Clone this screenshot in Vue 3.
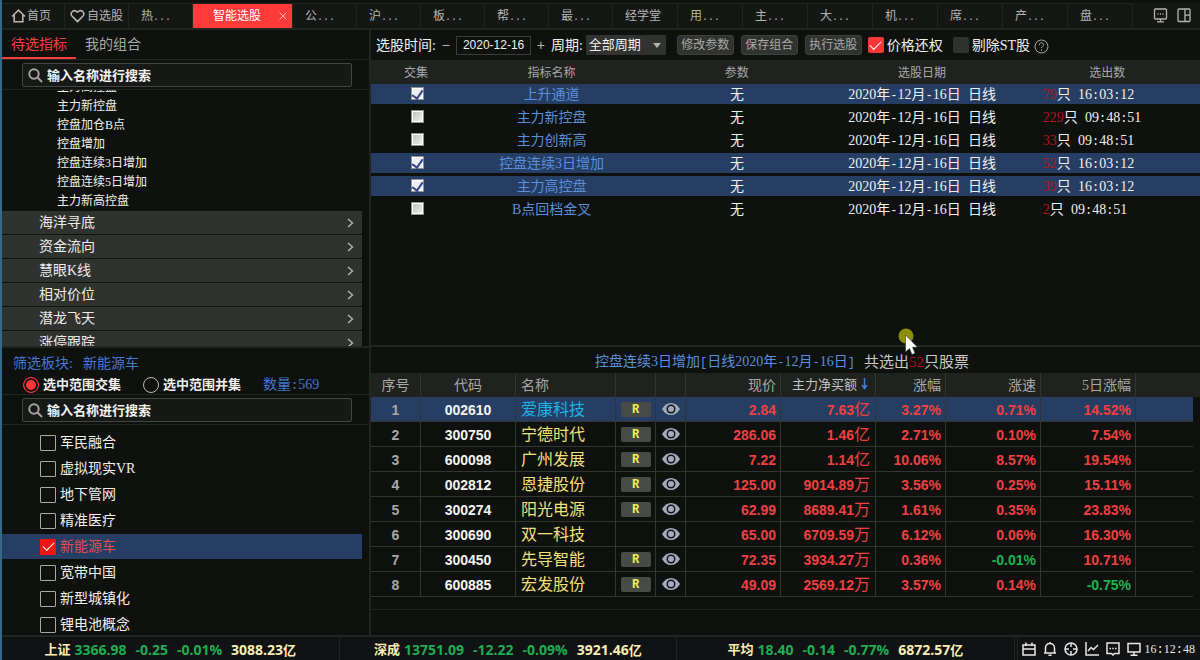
<script setup>
import { ref, h } from 'vue'

// Draws text with punctuation and spaces in half-em monospaced cells.
const Cells = (props) =>
  h('span', { class: 'cells' }, String(props.t).split(/([-.:[\]+ ]+)/).map((part, i) =>
    i % 2 ? h('span', { class: 'half' }, part) : part))
Cells.props = ['t']

const tabs = [
  { t: '公...' }, { t: '沪...' }, { t: '板...' }, { t: '帮...' }, { t: '最...' }, { t: '经学堂' },
  { t: '用...' }, { t: '主...' }, { t: '大...' }, { t: '机...' }, { t: '席...' }, { t: '产...' }, { t: '盘...' },
]
const indicators = ['主力高控盘', '主力新控盘', '控盘加仓B点', '控盘增加', '控盘连续3日增加', '控盘连续5日增加', '主力新高控盘']
const groups = ['海洋寻底', '资金流向', '慧眼K线', '相对价位', '潜龙飞天', '涨停跟踪']
const boards = ref([
  { n: '军民融合', on: false }, { n: '虚拟现实VR', on: false }, { n: '地下管网', on: false },
  { n: '精准医疗', on: false }, { n: '新能源车', on: true }, { n: '宽带中国', on: false },
  { n: '新型城镇化', on: false }, { n: '锂电池概念', on: false },
])
const picks = ref([
  { n: '上升通道', c: 79, time: '16:03:12', on: true },
  { n: '主力新控盘', c: 229, time: '09:48:51', on: false },
  { n: '主力创新高', c: 33, time: '09:48:51', on: false },
  { n: '控盘连续3日增加', c: 52, time: '16:03:12', on: true },
  { n: '主力高控盘', c: 39, time: '16:03:12', on: true },
  { n: 'B点回档金叉', c: 2, time: '09:48:51', on: false },
])
const stocks = [
  ['002610', '爱康科技', true, '2.84', '7.63', '亿', '3.27%', '0.71%', '14.52%'],
  ['300750', '宁德时代', true, '286.06', '1.46', '亿', '2.71%', '0.10%', '7.54%'],
  ['600098', '广州发展', true, '7.22', '1.14', '亿', '10.06%', '8.57%', '19.54%'],
  ['002812', '恩捷股份', true, '125.00', '9014.89', '万', '3.56%', '0.25%', '15.11%'],
  ['300274', '阳光电源', true, '62.99', '8689.41', '万', '1.61%', '0.35%', '23.83%'],
  ['300690', '双一科技', false, '65.00', '6709.59', '万', '6.12%', '0.06%', '16.30%'],
  ['300450', '先导智能', true, '72.35', '3934.27', '万', '0.36%', '-0.01%', '10.71%'],
  ['600885', '宏发股份', true, '49.09', '2569.12', '万', '3.57%', '0.14%', '-0.75%'],
]
const indexes = [
  { n: '上证', v: '3366.98', d: '-0.25', p: '-0.01%', a: '3088.23' },
  { n: '深成', v: '13751.09', d: '-12.22', p: '-0.09%', a: '3921.46' },
  { n: '平均', v: '18.40', d: '-0.14', p: '-0.77%', a: '6872.57' },
]
const range = ref('and')
const date = ref('2020-12-16')
const period = ref('全部周期')
const adjust = ref(true)
const noSt = ref(false)
</script>

<template>
  <div class="app">
    <nav class="tabs">
      <a href="#" class="tab icon-tab">
        <svg width="15" height="14" viewBox="0 0 15 14"><path d="M1 7.500 7.500 1.200 14 7.500M3.200 6v6.800h8.600V6" /></svg>首页
      </a>
      <a href="#" class="tab icon-tab">
        <svg width="15" height="14" viewBox="0 0 15 14"><path d="M7.500 12.600 2.200 7.300C-.6 4 3.600-.8 7.500 3.200 11.400-.8 15.600 4 12.800 7.300Z" /></svg>自选股
      </a>
      <a href="#" class="tab"><Cells t="热..." /></a>
      <a href="#" class="tab active">智能选股
        <svg width="8" height="8" viewBox="0 0 8 8"><path d="M.5.5l7 7M7.500.5l-7 7" /></svg>
      </a>
      <a v-for="x in tabs" :key="x.t" href="#" class="tab"><Cells :t="x.t" /></a>
      <div class="tools">
        <button aria-label="消息">
          <svg width="15" height="15" viewBox="0 0 15 15"><path d="M2.500 1h10q1 0 1 1v8q0 1-1 1h-10q-1 0-1-1V2q0-1 1-1ZM4 13.800h7M7.500 11v2.800M4.500 6h1M7 6h1M9.500 6h1" /></svg>
        </button>
        <button aria-label="布局">
          <svg width="14" height="15" viewBox="0 0 14 15"><path d="M2 1h10q1 0 1 1v10.500q0 1-1 1H2q-1 0-1-1V2q0-1 1-1ZM8 1v12.500M8 7.200h5" /></svg>
        </button>
      </div>
    </nav>

    <main class="body">
      <aside class="left">
        <section class="upper">
          <div class="side-tabs">
            <button class="on">待选指标</button>
            <button>我的组合</button>
          </div>
          <div class="search-row">
            <label class="search">
              <svg width="15" height="15" viewBox="0 0 15 15"><circle cx="6" cy="6" r="4.700" /><path d="m9.500 9.500 4.500 4.500" /></svg>
              <input type="text" placeholder="输入名称进行搜索" aria-label="搜索指标" />
            </label>
          </div>
          <div class="tree">
            <ul class="leafs"><li v-for="x in indicators" :key="x">{{ x }}</li></ul>
            <button v-for="g in groups" :key="g" class="group">
              <span>{{ g }}</span>
              <svg width="7" height="10" viewBox="0 0 7 10"><path d="m1 1 4.500 4L1 9" /></svg>
            </button>
          </div>
        </section>

        <section class="lower">
          <p class="filter">筛选板块:<span>新能源车</span></p>
          <div class="radios">
            <label><input v-model="range" type="radio" value="and" />选中范围交集</label>
            <label><input v-model="range" type="radio" value="or" />选中范围并集</label>
            <span class="count"><Cells t="数量:569" /></span>
          </div>
          <div class="search-row">
            <label class="search">
              <svg width="15" height="15" viewBox="0 0 15 15"><circle cx="6" cy="6" r="4.700" /><path d="m9.500 9.500 4.500 4.500" /></svg>
              <input type="text" placeholder="输入名称进行搜索" aria-label="搜索板块" />
            </label>
          </div>
          <div class="boards">
            <label v-for="b in boards" :key="b.n" class="board" :class="{ on: b.on }">
              <input v-model="b.on" type="checkbox" />{{ b.n }}
            </label>
          </div>
        </section>
      </aside>

      <div class="right">
        <form class="bar" @submit.prevent>
          <label for="day" class="cap">选股时间:</label>
          <button class="step" aria-label="前一天">−</button>
          <input id="day" v-model="date" type="text" class="day" />
          <button class="step" aria-label="后一天">+</button>
          <label for="period" class="cap">周期:</label>
          <span class="select">
            <select id="period" v-model="period"><option>全部周期</option></select>
          </span>
          <div class="actions">
            <button class="btn">修改参数</button>
            <button class="btn">保存组合</button>
            <button class="btn">执行选股</button>
          </div>
          <label class="flag"><input v-model="adjust" type="checkbox" /><span class="cap">价格还权</span></label>
          <label class="flag second"><input v-model="noSt" type="checkbox" /><span class="cap">剔除ST股</span></label>
          <button class="help" aria-label="帮助">
            <svg width="15" height="15" viewBox="0 0 15 15"><circle cx="7.500" cy="7.500" r="6.500" /><path d="M5.300 6c0-3 4.400-2.800 4.400-.2C9.700 7.300 7.500 7.200 7.500 9M7.500 10.400v1.400" /></svg>
          </button>
        </form>

        <div class="picks">
          <table>
            <colgroup><col class="c-check" /><col /><col /><col /><col /></colgroup>
            <thead><tr><th class="first">交集</th><th>指标名称</th><th>参数</th><th>选股日期</th><th>选出数</th></tr></thead>
            <tbody>
              <tr v-for="p in picks" :key="p.n" :class="{ on: p.on }">
                <td class="check"><input v-model="p.on" type="checkbox" :aria-label="p.n" /></td>
                <td class="name">{{ p.n }}</td>
                <td>无</td>
                <td><Cells t="2020年-12月-16日 日线" /></td>
                <td class="num"><b>{{ p.c }}</b><Cells :t="'只 ' + p.time" /></td>
              </tr>
            </tbody>
          </table>
        </div>

        <div class="result">
          <h2><Cells t="控盘连续3日增加[日线2020年-12月-16日]" /><span class="sum">共选出<b>52</b>只股票</span></h2>
          <table>
            <colgroup>
              <col class="w50" /><col class="w95" /><col class="w100" /><col class="w40" /><col class="w30" />
              <col class="w95" /><col class="w95" /><col class="w70" /><col class="w95" /><col class="w95" /><col /><col class="w7" />
            </colgroup>
            <thead>
              <tr>
                <th class="mid">序号</th><th class="mid">代码</th><th class="lt">名称</th><th></th><th></th><th>现价</th>
                <th class="sort">主力净买额<svg width="7" height="12" viewBox="0 0 7 12"><path d="M3.500 0v10M1 7l2.500 3.500L6 7" /></svg></th>
                <th>涨幅</th><th>涨速</th><th>5日涨幅</th><th class="end"></th><th class="end"></th>
              </tr>
            </thead>
            <tbody>
              <tr v-for="(s, i) in stocks" :key="s[0]" :class="{ on: i === 0 }">
                <td class="mid no">{{ i + 1 }}</td>
                <td class="mid code">{{ s[0] }}</td>
                <td class="lt stock">{{ s[1] }}</td>
                <td class="mid icon"><span v-if="s[2]" class="r">R</span></td>
                <td class="mid icon eye">
                  <svg width="18" height="12" viewBox="0 0 18 12"><path class="lid" d="M0 6Q3.500 0 9 0T18 6Q14.500 12 9 12T0 6Z" /><circle class="iris" cx="9" cy="6" r="4.500" /><circle class="pupil" cx="9" cy="6" r="3" /></svg>
                </td>
                <td>{{ s[3] }}</td>
                <td class="sum-cell">{{ s[4] }}<span class="unit">{{ s[5] }}</span></td>
                <td v-for="k in [6, 7, 8]" :key="k" :class="{ down: s[k][0] === '-' }">{{ s[k] }}</td>
                <td class="end"></td><td class="gutter"></td>
              </tr>
            </tbody>
          </table>
          <div class="rule"></div>
        </div>
        <svg class="cursor" width="20" height="28" viewBox="0 0 20 28">
          <circle cx="9" cy="8" r="7.500" fill="#8f8f0c" />
          <path d="M8.500 7v17l4-3.500 2.500 6 3-1.300-2.500-6h5Z" fill="#fff" stroke="#222" stroke-width=".5" />
        </svg>
      </div>
    </main>

    <footer class="status">
      <div v-for="x in indexes" :key="x.n" class="index">
        <span class="zh">{{ x.n }}</span><span class="dn">{{ x.v }}</span><span class="dn gap">{{ x.d }}</span><span class="dn gap">{{ x.p }}</span><span class="gap">{{ x.a }}<span class="zh">亿</span></span>
      </div>
      <div class="tray">
        <svg width="14" height="14" viewBox="0 0 14 14"><path d="M1 3h12v10H1ZM1 7h12M4 .5V4M10 .5V4" /></svg>
        <svg width="14" height="14" viewBox="0 0 14 14"><path d="M1 11h12M2.500 11V6c0-6 9-6 9 0v5M5.500 13.300h3M7 0v2" /></svg>
        <svg width="14" height="14" viewBox="0 0 14 14"><circle cx="7" cy="7" r="6" /><path d="M7 1v4M7 9v4M1 7h4M9 7h4" /></svg>
        <svg width="14" height="14" viewBox="0 0 14 14"><path d="M1 0v13h13M3 9l3-3.500 2.500 2L13 3" /></svg>
        <svg width="14" height="14" viewBox="0 0 14 14"><path d="M1 1h12v10.500H8.500L7 13l-1.500-1.500H1ZM3.500 6.500H5M6.300 6.500h1.500M9 6.500h1.500" /></svg>
        <svg width="14" height="14" viewBox="0 0 14 14"><path d="M1 1.500h12V10H1ZM7 10v3M3.500 13.200h7" /></svg>
        <time><Cells t="16:12:48" /></time>
      </div>
    </footer>
  </div>
</template>

<style>
body { margin: 0; background: #0f110f; }
.cells .half { font-family: "Liberation Mono", monospace; font-size: 12px; line-height: 1; white-space: pre; }
.tab .half, time .half { font-size: 10px; }
</style>

<style scoped>
* { box-sizing: border-box; }
.app {
  display: grid; grid-template-rows: 30px minmax(0, 1fr) 25px; height: 100vh;
  border-left: 2px solid #35698a; background: #0f110f; color: #f0f0ee;
  font: 14px/20px "Liberation Serif", "Noto Sans CJK SC", serif; overflow: hidden;
}
button, input, select { font: inherit; color: inherit; background: none; border: 0; padding: 0; margin: 0; }
svg { fill: none; stroke: currentColor; flex: none; }
ul, p, h2 { margin: 0; padding: 0; list-style: none; font-weight: 400; }
table { width: 100%; table-layout: fixed; border-collapse: separate; border-spacing: 0; }
th, td { padding: 0; font-weight: 400; white-space: nowrap; }

.tabs { display: flex; background: #151715; border-top: 3px solid #101210; border-bottom: 2px solid #232523; font-size: 12px; color: #b4b4b2; }
.tab {
  flex: 0 1 65px; min-width: 0; display: flex; align-items: center; padding-left: 12px; white-space: nowrap;
  color: inherit; text-decoration: none; border-right: 1px solid #232523; border-top: 1px solid #232523;
}
.tab:nth-child(-n+9) { flex-basis: 64px; }
.tab:first-child { flex-basis: 63px; }
.icon-tab { padding-left: 9px; gap: 1px; }
.icon-tab:nth-child(2) { padding-left: 5px; gap: 2px; }
.icon-tab svg { stroke-width: 1.6; }
.tab.active { flex: 0 0 100px; padding: 0 5px 0 20px; background: #fe3a3a; color: #fff; justify-content: space-between; }
.active svg { color: #ffc0c0; }
.tools { margin-left: auto; display: flex; align-items: center; gap: 9px; padding-right: 9px; }
.tools button { display: flex; }
.tools svg { stroke-width: 1.3; }

.body { display: grid; grid-template-columns: 369px minmax(0, 1fr); min-height: 0; }
.left { display: grid; grid-template-rows: 318px minmax(0, 1fr); border-right: 2px solid #232523; min-height: 0; }
.upper, .lower { display: flex; flex-direction: column; min-height: 0; }
.side-tabs { display: flex; flex: none; height: 30px; border-bottom: 1px solid #232523; color: #a8a8a6; }
.side-tabs button { padding: 2px 9px 0; border-bottom: 2px solid transparent; }
.side-tabs .on { color: #f4413f; border-bottom-color: #f4413f; }
.search-row { flex: none; padding: 3px 17px 2px 20px; border-bottom: 1px solid #232523; }
.search { display: flex; align-items: center; gap: 4px; height: 24px; padding-left: 5px; background: #171917; border: 1px solid #434543; border-radius: 2px; }
.search svg { stroke: #a2a4a2; stroke-width: 2; }
.search input { flex: 1; min-width: 0; outline: 0; font: bold 13px/20px "Open Sans", "Noto Sans CJK SC", sans-serif; }
.search input::placeholder { color: #f4f4f2; opacity: 1; }
.tree { flex: 1; min-height: 0; overflow: hidden; padding-right: 7px; border-bottom: 2px solid #232523; }
.leafs { margin-top: -12px; padding: 0 0 0 55px; font-size: 12px; line-height: 19px; }
.group { display: flex; align-items: center; justify-content: space-between; width: 100%; height: 24px; padding: 0 8px 0 37px; background: #303230; border-bottom: 1px solid #121412; color: #ecece9; }
.group svg { color: #b4b4b2; stroke-width: 1.4; }

.filter { height: 25px; padding: 6px 0 0 11px; line-height: 19px; color: #4678d2; }
.filter span { margin-left: 10px; }
.radios { display: flex; align-items: center; height: 22px; padding: 2px 0 0 21px; border-bottom: 1px solid #232523; font: bold 13px/19px "Open Sans", "Noto Sans CJK SC", sans-serif; }
.radios label { display: flex; align-items: center; gap: 4px; margin-right: 22px; }
.radios input { appearance: none; width: 16px; height: 16px; border: 1px solid #b6b6b4; border-radius: 50%; }
.radios input:checked { border: 1px solid #fb3838; background: #fb3838; box-shadow: inset 0 0 0 2px #0f110f; }
.count { color: #4678d2; font: 14px/19px "Liberation Serif", "Noto Sans CJK SC", serif; }
.boards { flex: 1; min-height: 0; overflow: hidden; padding-top: 5px; }
.board { display: flex; align-items: center; gap: 4px; height: 25px; margin: 0 7px 1px 0; padding-left: 38px; }
.board.on { background: #263e63; color: #dc5050; }
.board input, .flag input { appearance: none; display: grid; place-items: center; width: 16px; height: 16px; border: 1px solid #a8a8a6; border-radius: 1px; }
.board input:checked { background: #f01414; border-color: #f01414; }
.board input:checked::after, .flag input:checked::after { content: ""; width: 10px; height: 5px; margin-bottom: 3px; border: solid #fff; border-width: 0 0 1px 1px; transform: rotate(-45deg); }

.right { position: relative; display: flex; flex-direction: column; min-width: 0; min-height: 0; }
.bar { display: flex; align-items: center; flex: none; height: 30px; padding-left: 5px; white-space: nowrap; }
.cap { padding-top: 2px; }
.step { width: 10px; margin: 0 5px; color: #b4b4b2; font: 14px/18px "Liberation Sans", sans-serif; }
.day { width: 75px; height: 19px; margin: 0; padding-left: 6px; border: 1px solid #3c3e3c; font: 12px/17px "Liberation Sans", sans-serif; }
.select { position: relative; margin-left: 3px; }
.select select { appearance: none; display: block; width: 80px; height: 20px; padding-left: 3px; background: #313331; font-size: 13px; border-radius: 1px; }
.select::after { content: ""; position: absolute; right: 5px; top: 8px; border: 4px solid transparent; border-top: 5px solid #b0b0ae; border-bottom: 0; pointer-events: none; }
.actions { display: flex; gap: 7px; margin: 0 6px 0 11px; }
.btn { width: 57px; height: 20px; background: #313331; border: 1px solid #3e403e; border-radius: 3px; color: #a8a8a6; font-size: 12px; line-height: 18px; }
.flag { display: flex; align-items: center; gap: 3px; }
.flag.second { margin-left: 10px; }
.flag input { border: 0; background: #303230; border-radius: 2px; }
.flag input:checked { background: #fa3636; }
.help { display: flex; margin: 3px 0 0 4px; color: #a8a8a6; }

.picks { flex: none; height: 287px; border-bottom: 2px solid #232523; overflow: hidden; }
.c-check { width: 88px; }
.picks th { height: 24px; padding-top: 1px; background: #20221f; color: #a8a8a6; font-size: 12px; }
.picks .first { padding-left: 2px; }
.picks td { height: 23px; padding-top: 2px; line-height: 18px; text-align: center; border-bottom: 3px solid #0f110f; }
.picks .on td { background: #263e63; }
.picks .name { color: #5a8fdc; }
.picks .num { text-align: left; padding-left: 28px; }
.num b { font-weight: 400; color: #b4141c; }
.picks .check { padding: 3px 0 0 4px; vertical-align: top; }
.check input { appearance: none; display: grid; place-items: center; width: 13px; height: 13px; margin: 0 auto; background: linear-gradient(135deg, #bcbcba, #f4f4f2); border: 1px solid #8e908e; box-shadow: inset 0 0 0 1px #fff; }
.check input:checked { background: #eceef4; }
.check input:checked::after { content: ""; width: 5px; height: 9px; margin-bottom: 2px; border: solid #36468c; border-width: 0 2px 2px 0; transform: rotate(35deg); }

.result { flex: 1; min-height: 0; overflow: hidden; }
.result h2 { display: flex; justify-content: center; align-items: center; height: 26px; padding: 4px 7px 0 0; color: #5a8fdc; font-size: 14px; }
.sum { margin-left: 9px; font-size: 15px; color: #c8c8c6; }
.sum b { font-weight: 400; color: #a8141a; }
.w7 { width: 7px; } .w30 { width: 30px; } .w40 { width: 40px; } .w50 { width: 50px; }
.w70 { width: 70px; } .w95 { width: 95px; } .w100 { width: 100px; }
.result th { height: 24px; background: #20221f; color: #a8a8a6; }
.result th, .result td { text-align: right; padding: 2px 4px 0 0; border-right: 1px solid #333533; }
.result td { height: 25px; line-height: 22px; border-bottom: 1px solid #333533; color: #f04040; font-family: "Liberation Sans", "Noto Sans CJK SC", sans-serif; font-weight: 700; }
.result .on td { background: #263e63; }
.result .mid { text-align: center; padding-right: 0; }
.result .icon { padding-top: 0; }
.result .lt { text-align: left; padding-left: 5px; }
.result .end, .result .gutter { border-right: 0; }
.result .on .gutter, .result .gutter { background: none; border-bottom: 0; }
.result .sort { font-size: 13px; padding: 0 7px 0 0; color: #c4c4c2; }
.sort svg { margin-left: 4px; color: #3f82e0; vertical-align: -1px; stroke-width: 1.400; }
.result .sum-cell { padding-right: 5px; }
.result .no { color: #a8a8a6; }
.result .code { color: #f4f4f2; }
.result .stock { font-weight: 400; font-size: 16px; color: #f2e07a; }
.result .on .stock { color: #1eb4e6; }
.result .down { color: #1eb450; }
.unit { font-size: 16px; font-weight: 400; line-height: 1; }
.r { display: block; width: 30px; height: 15px; margin: 0 auto; border-radius: 2px; background: #484a48; color: #eef050; font: bold 12px/16px "Liberation Mono", monospace; }
.eye svg { display: block; margin: 0 auto; stroke: none; }
.lid, .pupil { fill: #a4acbc; }
.iris { fill: #10141c; }
.rule { height: 13px; border-bottom: 1px solid #232523; }
.cursor { position: absolute; left: 526px; top: 298px; stroke: none; }

.status { display: flex; background: #101214; border-top: 2px solid #232523; font: bold 14px/21px "Open Sans", "Noto Sans CJK SC", sans-serif; color: #fbeeb4; white-space: nowrap; }
.index { flex: 1; display: flex; justify-content: center; align-items: center; padding-top: 2px; border-right: 1px solid #232523; }
.index .zh { font-size: 13px; }
.index > .zh { margin-right: 4px; }
.dn { color: #22ac52; }
.gap { margin-left: 9px; }
.tray { display: flex; align-items: center; gap: 7px; margin-left: 2px; padding: 0 5px 0 4px; border-left: 1px solid #232523; color: #e8e8e6; }
.tray svg { stroke-width: 1.5; }
.tray time { margin-left: -3px; font: 12px/20px "Liberation Serif", serif; }
</style>
